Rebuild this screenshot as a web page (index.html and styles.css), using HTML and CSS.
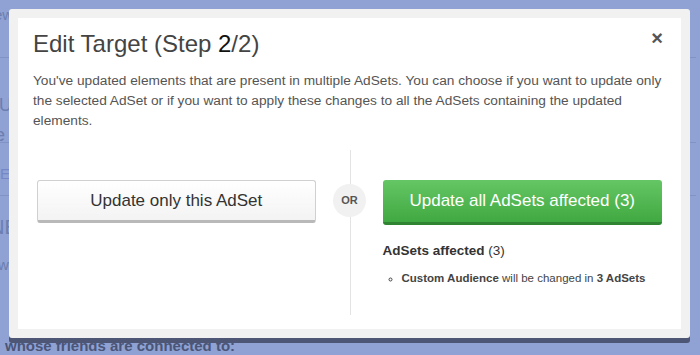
FILE: index.html
```html
<!DOCTYPE html>
<html lang="en">
<head>
    <meta charset="UTF-8">
    <title>Edit Target</title>
    <link rel="stylesheet" href="styles.css">
</head>
<body>
    <div class="page">
        <div class="page-row page-row-top">Reviewed</div>
        <div class="page-row page-row-tall">INCLUDE<br>Some</div>
        <div class="page-row page-row-link">Edit public</div>
        <div class="page-row page-row-big">NEW</div>
        <div class="page-row page-row-small">with</div>
        <div class="page-label">whose friends are connected to:</div>
    </div>

    <div class="modal">
        <div class="modal-header">
            <h2 class="modal-title">Edit Target (Step <span class="step-now">2</span>/2)</h2>
            <span class="modal-close">&times;</span>
        </div>
        <p class="modal-intro">
            You've updated elements that are present in multiple AdSets. You can choose if you want to update only the selected AdSet or if you want to apply these changes to all the AdSets containing the updated elements.
        </p>
        <div class="choices">
            <div class="choice choice-left">
                <button class="btn btn-default">Update only this AdSet</button>
            </div>
            <div class="choice choice-right">
                <button class="btn btn-success">Update all AdSets affected (3)</button>
                <div class="affected-title"><b>AdSets affected</b> (3)</div>
                <ul class="affected-list">
                    <li><b>Custom Audience</b> will be changed in <b>3 AdSets</b></li>
                </ul>
            </div>
            <span class="or-badge">OR</span>
        </div>
    </div>
</body>
</html>
```

FILE: styles.css
```css
html, body {
    margin: 0;
    height: 355px;
    overflow: hidden;
}
body {
    font-family: "Liberation Sans", Arial, sans-serif;
    background: #8fa2d3;
    position: relative;
}

/* page behind the dialog */
.page {
    box-sizing: border-box;
    height: 355px;
    display: flex;
    flex-direction: column;
    padding: 6px 4px 1px;
    color: #6d7eb0;
    font-size: 15px;
}
.page-row {
    border-bottom: 1px solid #8192c4;
}
.page-row-top { height: 51px; margin-left: -40px; }
.page-row-tall { height: 52px; padding-top: 32px; font-size: 18px; line-height: 30px; margin-left: -46px; }
.page-row-link { height: 30px; padding-top: 22px; margin-left: -4px; color: #7488c8; }
.page-row-big { border: 0; height: 40px; padding-top: 20px; font-size: 20px; margin-left: -14px; }
.page-row-small { border: 0; height: 34px; margin-left: -6px; }
.page-label {
    margin-top: auto;
    color: #4b5577;
    font-weight: bold;
    font-size: 15px;
    line-height: 17px;
    margin-left: 1px;
}

/* dialog */
.modal {
    position: absolute;
    left: 9px;
    top: 9px;
    width: 663px;
    height: 311px;
    border: 9px solid #f1f1f1;
    border-radius: 3px;
    background: #fff;
    box-shadow: 0 5px 0 #4d5675;
    color: #555;
}
.modal-header {
    display: flex;
    justify-content: space-between;
    align-items: flex-start;
    padding: 11px 18px 0 15px;
}
.modal-title {
    margin: 0;
    font-size: 24px;
    font-weight: normal;
    line-height: 30px;
    color: #444;
}
.step-now { color: #111; }
.modal-close {
    font-size: 20px;
    font-weight: bold;
    line-height: 20px;
    color: #555;
    margin-top: -1px;
}
.modal-intro {
    margin: 12px 0 0;
    padding: 0 12px 0 15px;
    font-size: 13.7px;
    line-height: 20px;
    color: #555;
}

.choices {
    position: relative;
    display: grid;
    grid-template-columns: 1fr 1fr;
    margin-top: 19px;
    height: 165px;
}
.choice { padding-top: 30px; }
.choice-left { padding-left: 19px; padding-right: 34px; }
.choice-right {
    padding-left: 32px;
    padding-right: 19px;
    border-left: 1px solid #e3e3e3;
}
.or-badge {
    position: absolute;
    left: 315px;
    top: 34px;
    width: 33px;
    height: 33px;
    border-radius: 50%;
    background: #f1f1f1;
    color: #555;
    font-size: 11px;
    font-weight: bold;
    line-height: 33px;
    text-align: center;
}

.btn {
    display: block;
    width: 100%;
    height: 43px;
    font-family: inherit;
    font-size: 17px;
    border-radius: 3px;
    cursor: pointer;
    padding: 0;
}
.btn-default {
    background: linear-gradient(#ffffff, #f3f3f3);
    border: 1px solid #d0d0d0;
    border-bottom: 3px solid #b9b9b9;
    color: #333;
}
.btn-success {
    background: linear-gradient(#64c664, #41a941);
    border: 0;
    border-bottom: 3px solid #2f8431;
    color: #fff;
    height: 45px;
}

.affected-title {
    margin-top: 18px;
    font-size: 13.5px;
    color: #333;
}
.affected-list {
    margin: 14px 0 0;
    padding-left: 19px;
    list-style: circle;
    font-size: 11.5px;
    color: #444;
}
```
